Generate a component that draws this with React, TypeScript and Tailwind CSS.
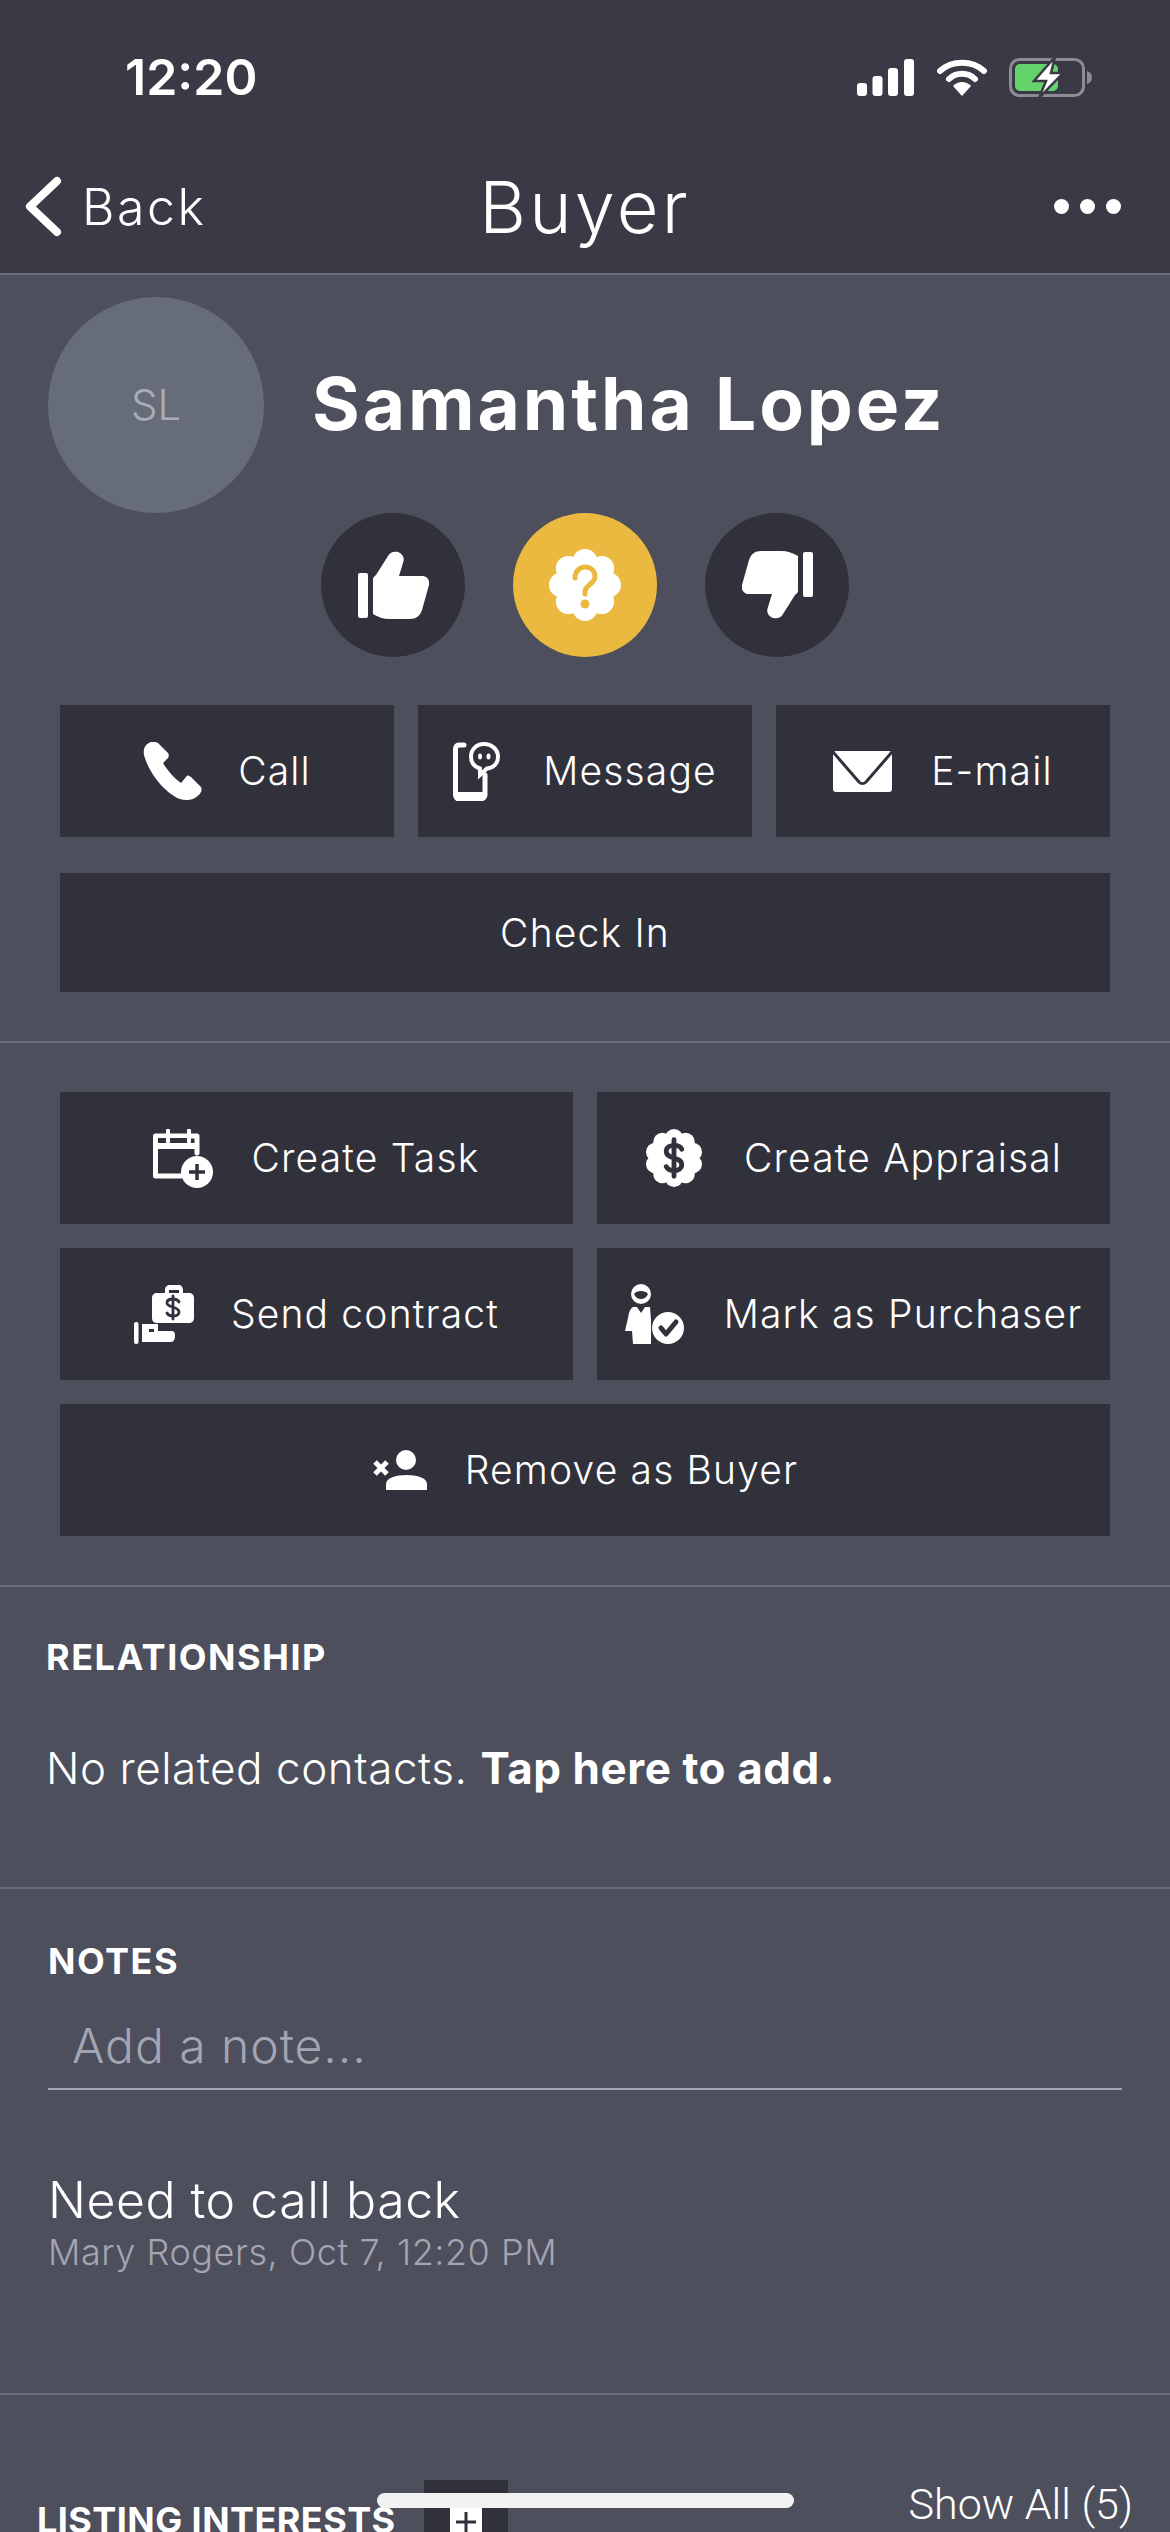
import React from "react";

const Flower = ({ lobes, size, inner, lobeR, ring }: { lobes: number; size: number; inner: number; lobeR: number; ring: number }) => (
  <>
    <circle cx={size / 2} cy={size / 2} r={inner} fill="#fff" />
    {Array.from({ length: lobes }).map((_, i) => {
      const a = (i / lobes) * Math.PI * 2 - Math.PI / 2;
      return <circle key={i} cx={size / 2 + ring * Math.cos(a)} cy={size / 2 + ring * Math.sin(a)} r={lobeR} fill="#fff" />;
    })}
  </>
);

const thumb = "M15 63V28C15 26 17 25 18 24L30 5C32 1 36 0 40 1C45 3 47 7 45 12L41 25H64C69 25 72 29 71 34L64 59C62 65 58 68 52 68H32C25 68 20 66 15 63Z";

const ThumbUp = () => (
  <svg width="71" height="68" viewBox="0 0 71 68" fill="#fff">
    <rect x="0" y="22" width="10" height="45" rx="2" />
    <path d={thumb} />
  </svg>
);
const ThumbDown = () => (
  <svg width="71" height="68" viewBox="0 0 71 68" fill="#fff">
    <g transform="rotate(180 35.5 34)">
      <rect x="0" y="22" width="10" height="45" rx="2" />
      <path d={thumb} />
    </g>
  </svg>
);
const Question = () => (
  <svg width="72" height="72" viewBox="0 0 72 72">
    <Flower lobes={8} size={72} inner={26} lobeR={12.5} ring={23.5} />
    <path d="M26 29C26 22 31 18 36 18C42 18 46 22 46 28C46 34 37 36 36 42V45" fill="none" stroke="#ebb93f" strokeWidth="5" strokeLinecap="round" />
    <circle cx="36" cy="55" r="4.5" fill="#ebb93f" />
  </svg>
);
const Phone = () => (
  <svg width="59" height="58" viewBox="0 0 59 58" fill="#fff">
    <path d="M8 0C2 2 0 7 1 13C4 25 15 44 31 54C36 58 44 59 50 57C56 54 60 50 58 45L48 35C46 33 44 33 43 35L38 41C32 37 24 28 20 21L25 16C26 14 26 12 25 11L15 1C13 0 10 -1 8 0Z" />
  </svg>
);
const Message = () => (
  <svg width="47" height="59" viewBox="0 0 47 59" fill="none">
    <path d="M11 3H6C3.5 3 2.5 5 2.5 7V53C2.5 55 4 57 6 57H28C30 57 32 55 32 53V33" stroke="#fff" strokeWidth="5" strokeLinecap="round" />
    <path d="M3 50H32V54C32 57 30 59 28 59H6C3 59 1 57 1 54V50Z" fill="#fff" />
    <path d="M31 2C23.5 2 18 7.5 18 14.5C18 21 22 25 27 26.5L27 33L34 26.5C41 25.5 45 21 45 14.5C45 7.5 38.5 2 31 2Z" stroke="#fff" strokeWidth="4" />
    <ellipse cx="27" cy="14.5" rx="2" ry="3" fill="#fff" />
    <ellipse cx="35.5" cy="14.5" rx="2" ry="3" fill="#fff" />
  </svg>
);
const Mail = () => (
  <svg width="59" height="41" viewBox="0 0 59 41" fill="none">
    <rect width="59" height="41" rx="3" fill="#fff" />
    <path d="M0 1L26 31C28 33 31 33 33 31L59 1" stroke="#31313c" strokeWidth="3" />
  </svg>
);
const CalendarPlus = () => (
  <svg width="60" height="59" viewBox="0 0 60 59" fill="none">
    <path d="M2.5 7H44V24M2.5 7V47H28" stroke="#fff" strokeWidth="5" strokeLinejoin="round" strokeLinecap="round" />
    <rect x="0" y="14" width="46" height="6" fill="#fff" />
    <rect x="13" y="0" width="4" height="14" rx="1" fill="#fff" />
    <rect x="34" y="0" width="4" height="14" rx="1" fill="#fff" />
    <rect x="5" y="9" width="8" height="5" fill="#31313c" />
    <rect x="17" y="9" width="17" height="5" fill="#31313c" />
    <circle cx="44" cy="43" r="16" fill="#fff" />
    <path d="M44 35V51M36 43H52" stroke="#31313c" strokeWidth="3.5" />
  </svg>
);
const DollarFlower = () => (
  <svg width="58" height="60" viewBox="0 0 60 60" fill="none">
    <Flower lobes={10} size={60} inner={24} lobeR={9.5} ring={20.5} />
    <path d="M38 21C37 18 34 17 30 17C26 17 22 19 22 23C22 32 38 28 38 37C38 41 34 43 30 43C26 43 23 41 22 39M30 11V49" stroke="#31313c" strokeWidth="5" strokeLinecap="round" />
  </svg>
);
const BagHand = () => (
  <svg width="60" height="59" viewBox="0 0 60 59" fill="none">
    <path d="M31 8V5C31 2 33 0 36 0H45C47 0 49 2 49 5V8H55C58 8 60 10 60 13V33C60 36 58 38 55 38H23C20 38 18 36 18 33V13C18 10 20 8 23 8H31ZM35 8H45V5H35V8Z" fill="#fff" fillRule="evenodd" />
    <path d="M45 17C44 15 42 14 39 14C36 14 33 15 33 18C33 23 45 21 45 27C45 30 42 31 39 31C36 31 34 30 33 28M39 11V34" stroke="#31313c" strokeWidth="2.8" strokeLinecap="round" />
    <rect x="0" y="37" width="4.5" height="22" rx="2" fill="#fff" />
    <path d="M8 39H24V46H38C40 46 41 48 41 50C41 54 40 57 37 57H8V39ZM15 44V47H20V44Z" fill="#fff" fillRule="evenodd" />
  </svg>
);
const PersonCheck = () => (
  <svg width="60" height="60" viewBox="0 0 60 60" fill="none">
    <circle cx="16" cy="10" r="10" fill="#fff" />
    <path d="M9 10C11 6 21 6 23 10C22 13 19 15 16 15C13 15 10 13 9 10Z" fill="#31313c" />
    <path d="M8 23H12L16 29L20 23H25L26 36V60H8L7 47H0L3 34C4 28 5 25 8 23Z" fill="#fff" />
    <circle cx="43" cy="44" r="16" fill="#fff" />
    <path d="M36 44L41 50L51 38" stroke="#31313c" strokeWidth="5" strokeLinecap="round" strokeLinejoin="round" />
  </svg>
);
const RemoveUser = () => (
  <svg width="55" height="40" viewBox="0 0 55 40" fill="none">
    <circle cx="34" cy="10" r="10" fill="#fff" />
    <path d="M14 40V34C14 28 24 25 34.5 25C45 25 55 28 55 34V40H14Z" fill="#fff" />
    <path d="M3 12L15 24M15 12L3 24" stroke="#fff" strokeWidth="5" />
  </svg>
);

const Signal = () => (
  <svg width="57" height="37" viewBox="0 0 57 37" fill="#fff">
    <rect x="0" y="24" width="10" height="13" rx="3" />
    <rect x="15.5" y="17" width="10" height="20" rx="3" />
    <rect x="31" y="9" width="10" height="28" rx="3" />
    <rect x="47" y="0" width="10" height="37" rx="3" />
  </svg>
);
const Wifi = () => (
  <svg width="50" height="37" viewBox="0 0 50 37" fill="none">
    <path d="M3 12C15 1 35 1 47 12" stroke="#fff" strokeWidth="6" strokeLinecap="round" />
    <path d="M12 20C19 13 31 13 38 20" stroke="#fff" strokeWidth="6" strokeLinecap="round" />
    <path d="M16 27C21 21.5 29 21.5 34 27L25 37Z" fill="#fff" />
  </svg>
);
const Battery = () => (
  <svg width="83" height="39" viewBox="0 0 83 39" fill="none">
    <rect x="1.5" y="1.5" width="73" height="36" rx="9" stroke="#8b8c94" strokeWidth="3" />
    <path d="M78 13C81 14 83 16 83 19.5C83 23 81 25 78 26Z" fill="#8b8c94" />
    <rect x="6" y="6" width="43" height="27" rx="5" fill="#65d36c" />
    <path d="M46 -1L25 23H37L30 40L54 15H42Z" fill="#fff" stroke="#393a45" strokeWidth="2.5" />
  </svg>
);

const ActionButton = ({ icon, label, className, gap }: { icon: React.ReactNode; label: string; className: string; gap: string }) => (
  <div className={`flex items-center justify-center bg-[#31313c] text-[39px] leading-[50px] font-light tracking-[0.03em] text-white ${gap} ${className}`}>
    {icon}
    <span>{label}</span>
  </div>
);

const Divider = () => <div className="h-[2px] bg-[#6c6e7a]" />;

export default function App() {
  return (
    <div className="relative h-[2532px] w-[1170px] overflow-hidden bg-[#4d4f5c] font-['Inter',sans-serif] text-white">
      <header className="bg-[#393a45]">
        <div className="flex h-[154px] items-center justify-between pr-[78px] pl-[125px]">
          <span className="text-[50px] leading-[60px] font-semibold">12:20</span>
          <div className="flex items-center gap-[23px]">
            <Signal />
            <div className="flex items-center gap-[22px]">
              <Wifi />
              <Battery />
            </div>
          </div>
        </div>
        <div className="grid h-[119px] grid-cols-3 items-start">
          <div className="flex items-center gap-[20px] pl-[25px]">
            <svg width="37" height="61" viewBox="0 0 37 61" fill="none" className="mt-[22px]">
              <path d="M32 5L5 30.5L32 56" stroke="#fff" strokeWidth="8" strokeLinecap="round" strokeLinejoin="round" />
            </svg>
            <span className="mt-[22px] text-[50px] leading-[60px] font-light tracking-[0.05em]">Back</span>
          </div>
          <div className="mt-[13px] text-center text-[72px] leading-[80px] font-light tracking-[0.045em]">Buyer</div>
          <div className="flex justify-end gap-[11px] pt-[45px] pr-[49px]">
            <span className="h-[15px] w-[15px] rounded-full bg-white" />
            <span className="h-[15px] w-[15px] rounded-full bg-white" />
            <span className="h-[15px] w-[15px] rounded-full bg-white" />
          </div>
        </div>
      </header>
      <Divider />

      <section className="pt-[22px] pb-[49px]">
        <div className="flex items-center pl-[48px]">
          <div className="flex h-[216px] w-[216px] items-center justify-center rounded-full bg-[#666c78] pb-[2px] text-[42px] font-light text-[#a9adb8]">SL</div>
          <h1 className="ml-[48px] pb-[2px] text-[73px] leading-[90px] font-bold tracking-[0.04em]">Samantha Lopez</h1>
        </div>
        <div className="flex justify-center gap-[48px]">
          <div className="flex h-[144px] w-[144px] items-center justify-center rounded-full bg-[#31313c]"><ThumbUp /></div>
          <div className="flex h-[144px] w-[144px] items-center justify-center rounded-full bg-[#ebb93f]"><Question /></div>
          <div className="flex h-[144px] w-[144px] items-center justify-center rounded-full bg-[#31313c]"><ThumbDown /></div>
        </div>
        <div className="mt-[48px] grid grid-cols-3 gap-[24px] px-[60px]">
          <ActionButton icon={<Phone />} label="Call" gap="gap-[36px]" className="h-[132px]" />
          <ActionButton icon={<Message />} label="Message" gap="gap-[43px]" className="h-[132px]" />
          <ActionButton icon={<Mail />} label="E-mail" gap="gap-[39px]" className="h-[132px]" />
        </div>
        <div className="mt-[36px] px-[60px]">
          <div className="flex h-[119px] items-center justify-center bg-[#31313c] pt-[2px] text-[39px] font-light tracking-[0.03em]">Check In</div>
        </div>
      </section>
      <Divider />

      <section className="grid grid-cols-2 gap-[24px] px-[60px] pt-[49px] pb-[49px]">
        <ActionButton icon={<CalendarPlus />} label="Create Task" gap="gap-[38px]" className="h-[132px]" />
        <ActionButton icon={<DollarFlower />} label="Create Appraisal" gap="gap-[41px]" className="h-[132px]" />
        <ActionButton icon={<BagHand />} label="Send contract" gap="gap-[37px]" className="h-[132px]" />
        <ActionButton icon={<PersonCheck />} label="Mark as Purchaser" gap="gap-[39px]" className="h-[132px]" />
        <ActionButton icon={<RemoveUser />} label="Remove as Buyer" gap="gap-[38px]" className="col-span-2 h-[132px]" />
      </section>
      <Divider />

      <section className="h-[300px] pt-[50px] pl-[46px]">
        <h2 className="text-[36px] leading-[40px] font-bold tracking-[0.042em]">RELATIONSHIP</h2>
        <p className="mt-[66px] text-[44px] leading-[50px] font-light tracking-[0.0125em]">
          No related contacts. <span className="font-bold">Tap here to add.</span>
        </p>
      </section>
      <Divider />

      <section className="h-[504px] px-[48px] pt-[52px]">
        <h2 className="text-[36px] leading-[40px] font-bold tracking-[0.042em]">NOTES</h2>
        <div className="mt-[35px] border-b-2 border-[#a3a5b3] pb-[12px] pl-[24px] text-[48px] leading-[60px] font-light tracking-[0.02em] text-[#a3a5b3]">Add a note...</div>
        <p className="mt-[80px] text-[50px] leading-[60px] font-light tracking-[0.01em]">Need to call back</p>
        <p className="mt-[2px] text-[36px] leading-[40px] font-light tracking-[0.015em] text-[#a3a5b3]">Mary Rogers, Oct 7, 12:20 PM</p>
      </section>
      <Divider />

      <section className="flex items-start pt-[85px] pr-[37px] pl-[37px]">
        <h2 className="mt-[20px] text-[36px] leading-[40px] font-bold tracking-[0.012em]">LISTING INTERESTS</h2>
        <div className="ml-[28px] flex h-[84px] w-[84px] items-center justify-center bg-[#31313c]">
          <div className="flex h-[32px] w-[32px] items-center justify-center bg-white">
            <svg width="22" height="22" viewBox="0 0 22 22"><path d="M11 1V21M1 11H21" stroke="#31313c" strokeWidth="3" /></svg>
          </div>
        </div>
        <span className="ml-auto font-['Roboto',sans-serif] text-[43px] leading-[48px] font-light">Show All (5)</span>
      </section>

      <div className="absolute top-[2493px] left-[377px] h-[15px] w-[417px] rounded-full bg-[#f2f2f2]" />
    </div>
  );
}
